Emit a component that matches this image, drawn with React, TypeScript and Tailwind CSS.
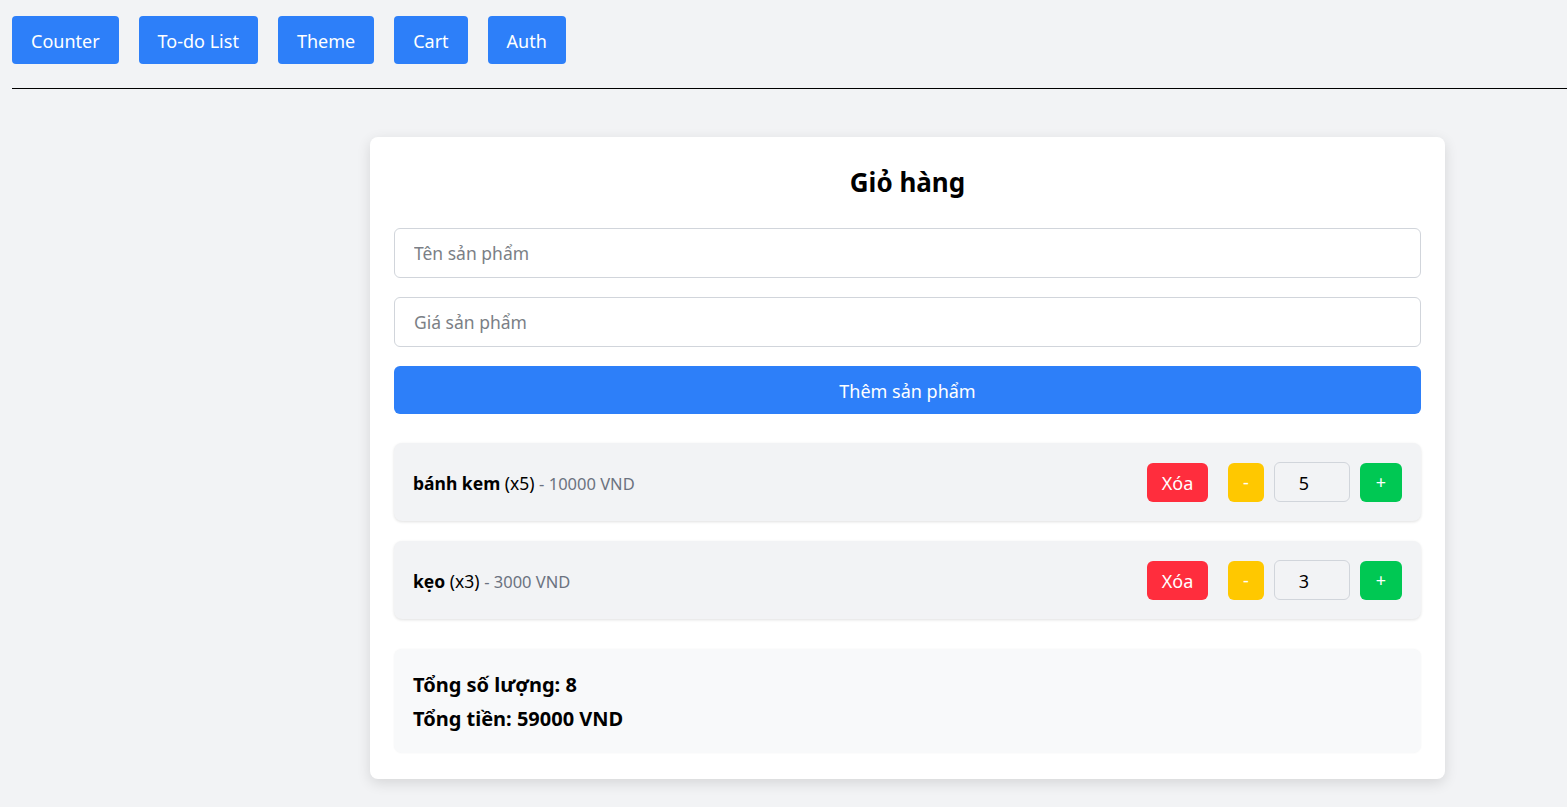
import React from "react";

const navItems = ["Counter", "To-do List", "Theme", "Cart", "Auth"];

const items = [
  { name: "bánh kem", qty: 5, price: 10000 },
  { name: "kẹo", qty: 3, price: 3000 },
];

export default function App() {
  return (
    <div className="min-h-screen bg-[#f2f3f5] pl-3 pt-4 pb-8 text-black" style={{ fontFamily: '"Noto Sans", "Open Sans", sans-serif' }}>
      <nav className="flex gap-5">
        {navItems.map((n) => (
          <button key={n} className="h-12 rounded-[4px] bg-[#2d7ff9] px-[19px] pt-[2px] text-[18px] text-white">
            {n}
          </button>
        ))}
      </nav>
      <hr className="mt-6 border-t border-black" />
      <div className="ml-[358px] mt-12 w-[1075px] rounded-lg bg-white px-6 pt-[25px] pb-[26px] shadow-[0_4px_14px_rgba(0,0,0,0.12)]">
        <h2 className="mb-[26px] text-center text-[26px] font-bold leading-[40px]">Giỏ hàng</h2>
        <input
          placeholder="Tên sản phẩm"
          className="mb-[19px] block h-[50px] w-full rounded-md border border-[#d1d5db] bg-white px-[19px] text-[17.5px] outline-none placeholder:text-[#7b7f86]"
        />
        <input
          placeholder="Giá sản phẩm"
          className="mb-[19px] block h-[50px] w-full rounded-md border border-[#d1d5db] bg-white px-[19px] text-[17.5px] outline-none placeholder:text-[#7b7f86]"
        />
        <button className="block h-12 w-full rounded-md bg-[#2d7ff9] pt-[2px] text-[18px] text-white">Thêm sản phẩm</button>
        <ul className="mt-[29px] flex flex-col gap-5">
          {items.map((it) => (
            <li
              key={it.name}
              className="flex h-[78px] items-center justify-between rounded-lg bg-[#f2f3f5] pl-[19px] pr-[19px] shadow-[0_1px_3px_rgba(0,0,0,0.12)]"
            >
              <div className="pt-[3px] text-[17.5px]">
                <span className="font-bold">{it.name}</span> (x{it.qty}){" "}
                <span className="text-[16.5px] text-[#6b7280]">- {it.price} VND</span>
              </div>
              <div className="flex items-center">
                <button className="h-[39px] w-[61px] rounded-md bg-[#ff2d3d] pt-[2px] text-[18px] text-white">Xóa</button>
                <button className="ml-5 h-[39px] w-9 rounded-md bg-[#ffc800] text-[18px] text-white">-</button>
                <input
                  readOnly
                  value={it.qty}
                  className="ml-[10px] h-10 w-[76px] rounded-md border border-[#d1d5db] bg-[#f2f3f5] pt-[2px] pr-4 text-center text-[18px] outline-none"
                />
                <button className="ml-[10px] h-[39px] w-[42px] rounded-md bg-[#00c853] text-[18px] text-white">+</button>
              </div>
            </li>
          ))}
        </ul>
        <div className="mt-[30px] rounded-lg bg-[#f8f9fa] px-[19px] pt-[19px] pb-[17px] text-[20px] font-bold leading-[34px] shadow-[0_0_2px_rgba(0,0,0,0.05)]">
          <div>Tổng số lượng: 8</div>
          <div>Tổng tiền: 59000 VND</div>
        </div>
      </div>
    </div>
  );
}
